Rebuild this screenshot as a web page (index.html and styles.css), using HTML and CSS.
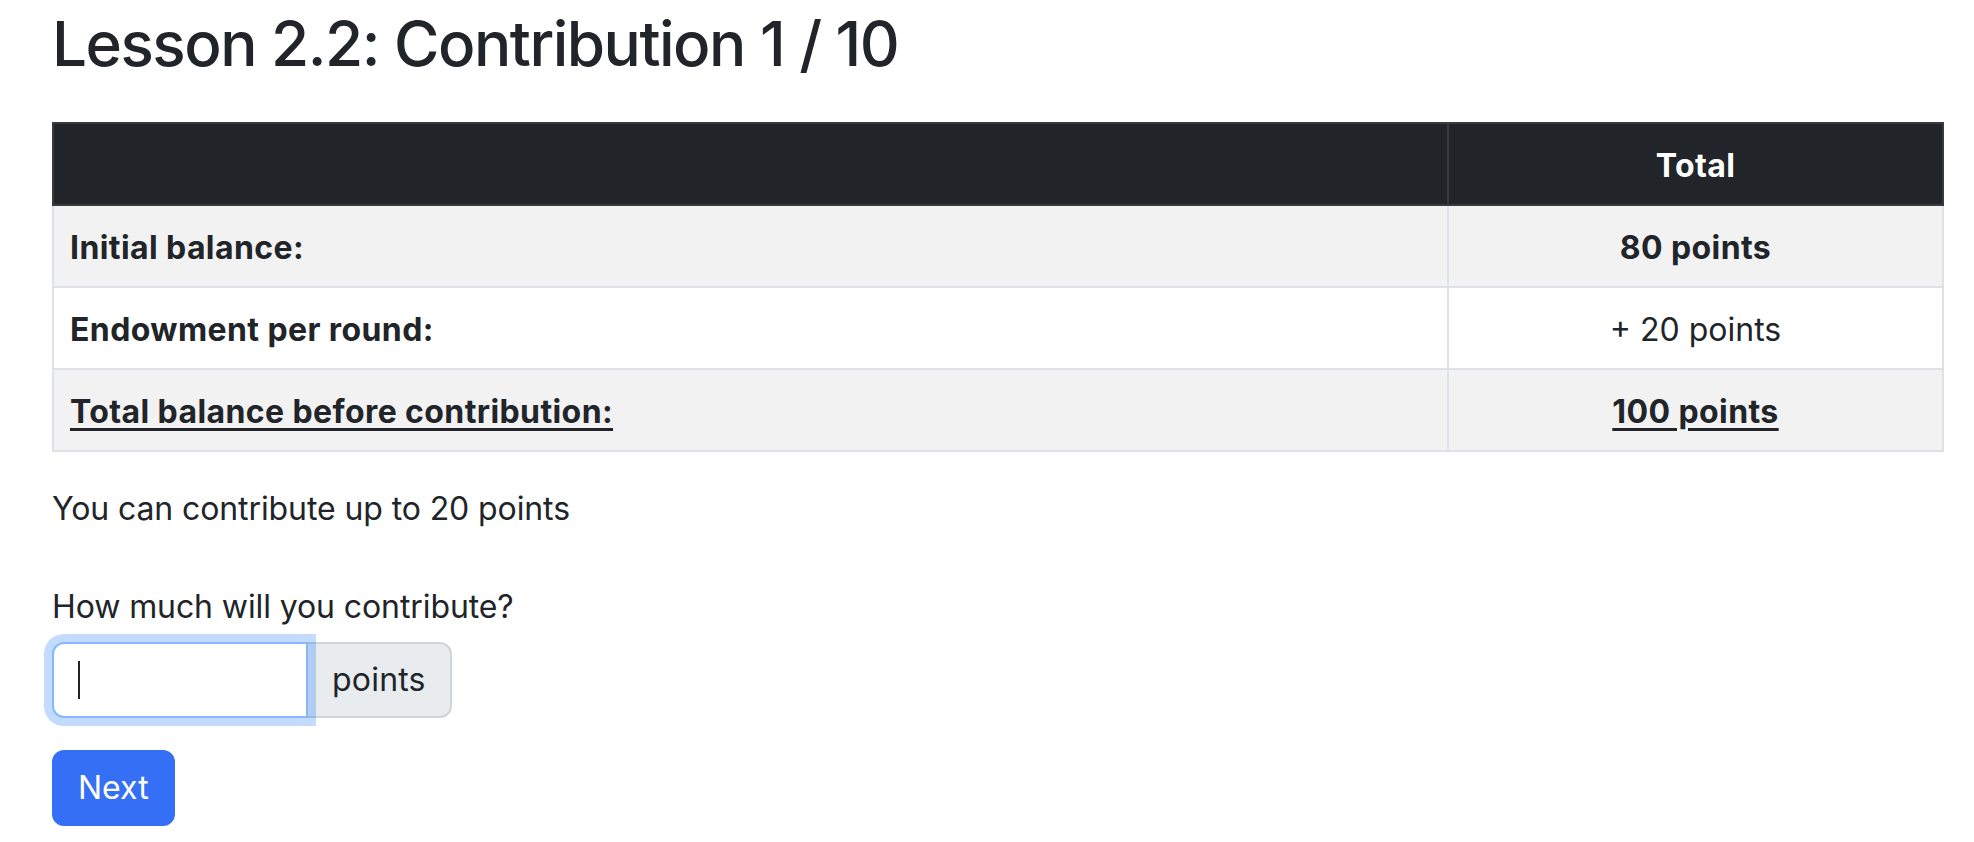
FILE: index.html
```html
<!DOCTYPE html>
<html lang="en">
<head>
<meta charset="utf-8">
<title>Lesson 2.2: Contribution 1 / 10</title>
<link rel="stylesheet" href="styles.css">
</head>
<body>
<div class="page">
  <h1 class="title">Lesson 2.2: Contribution 1 / 10</h1>
  <table class="balance">
    <thead>
      <tr>
        <th class="label-col"></th>
        <th class="value-col">Total</th>
      </tr>
    </thead>
    <tbody>
      <tr class="striped">
        <td class="label-cell">Initial balance:</td>
        <td class="value-cell strong">80 points</td>
      </tr>
      <tr>
        <td class="label-cell">Endowment per round:</td>
        <td class="value-cell">+ 20 points</td>
      </tr>
      <tr class="striped">
        <td class="label-cell"><u>Total balance before contribution:</u></td>
        <td class="value-cell strong"><u>100 points</u></td>
      </tr>
    </tbody>
  </table>
  <p class="info">You can contribute up to 20 points</p>
  <form class="contribute">
    <label class="field-label" for="amount">How much will you contribute?</label>
    <div class="input-group">
      <div class="input-wrap">
        <input id="amount" class="form-control" type="text">
        <span class="caret"></span>
      </div>
      <span class="addon">points</span>
    </div>
    <button type="button" class="btn">Next</button>
  </form>
</div>
</body>
</html>
```

FILE: styles.css
```css
* { box-sizing: border-box; }

html, body {
  margin: 0;
  padding: 0;
  background: #ffffff;
}

body {
  font-family: Inter, "Noto Sans", "Liberation Sans", sans-serif;
  font-size: 32px;
  line-height: 1.5;
  color: #212529;
}

.page {
  padding: 7px 30px 0 52px;
}

.title {
  margin: 0 0 41px 0;
  font-size: 62px;
  font-weight: 500;
  line-height: 1.2;
  letter-spacing: -1.5px;
}

.balance {
  width: 100%;
  border-collapse: collapse;
  margin-bottom: 32px;
  border: 2px solid #dee2e6;
}

.balance th,
.balance td {
  padding: 18px 16px 14px 16px;
  border: 2px solid #dee2e6;
  vertical-align: top;
}

.balance thead th {
  background: #212529;
  color: #ffffff;
  font-weight: 700;
  border-color: #373b3e;
  letter-spacing: 0.4px;
}

.balance .value-col { width: 495px; text-align: center; }

.balance tbody td { background: #ffffff; }
.balance tbody tr.striped td { background: #f2f2f2; }

.label-cell { font-weight: 700; text-align: left; letter-spacing: 0.4px; }
.value-cell { text-align: center; font-weight: 400; letter-spacing: 0; }
.value-cell.strong { font-weight: 700; letter-spacing: 0.4px; }

.balance u {
  text-decoration-thickness: 3px;
  text-underline-offset: 5px;
}

.info {
  margin: 0 0 47px 0;
  padding-top: 1px;
  letter-spacing: -0.1px;
}

.contribute {
  display: flex;
  flex-direction: column;
  align-items: flex-start;
}

.field-label {
  display: block;
  padding-top: 3px;
  margin-bottom: 11px;
  letter-spacing: -0.1px;
}

.input-group {
  display: flex;
  margin-bottom: 32px;
}

.input-wrap {
  position: relative;
  z-index: 2;
}

.form-control {
  display: block;
  width: 256px;
  height: 76px;
  padding: 12px 24px;
  font: inherit;
  color: #212529;
  background: #ffffff;
  border: 2px solid #86b7fe;
  border-radius: 12px 0 0 12px;
  box-shadow: 0 0 0 8px rgba(13, 110, 253, 0.25);
  outline: none;
  caret-color: transparent;
}

.caret {
  position: absolute;
  left: 26px;
  top: 19px;
  width: 2px;
  height: 38px;
  background: #212529;
}

.addon {
  display: flex;
  align-items: center;
  height: 76px;
  padding: 12px 24px;
  margin-left: -2px;
  background: #e9ecef;
  border: 2px solid #ced4da;
  border-radius: 0 12px 12px 0;
  color: #212529;
  letter-spacing: 0.2px;
}

.btn {
  font: inherit;
  color: #ffffff;
  background: #346ff5;
  border: 2px solid #346ff5;
  border-radius: 12px;
  padding: 12px 24px;
  height: 76px;
  line-height: 48px;
  letter-spacing: 0;
  cursor: pointer;
}
```
